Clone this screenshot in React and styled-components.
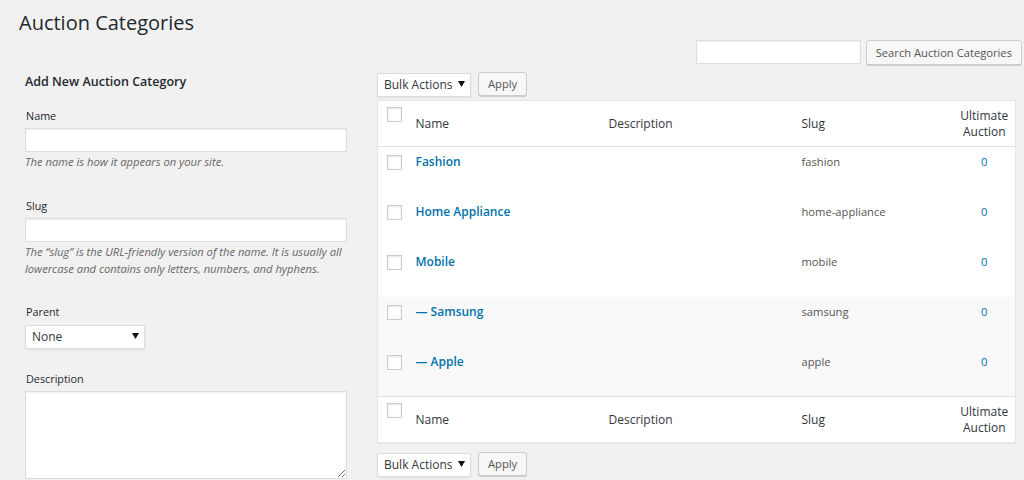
import React from "react";
import styled, { createGlobalStyle } from "styled-components";

const GlobalStyle = createGlobalStyle`
  * {
    box-sizing: border-box;
  }
  body {
    margin: 0;
    background: #f1f1f1;
    font-family: "Open Sans", "Liberation Sans", sans-serif;
    color: #444;
    overflow: hidden;
  }
`;

const Wrap = styled.div`
  padding: 0 2px 0 19px;
  height: 480px;
  overflow: hidden;
`;

const Title = styled.h1`
  margin: 0;
  padding: 8px 0 3px;
  font-size: 20px;
  line-height: 29px;
  font-weight: 400;
  color: #23282d;
`;

const SearchRow = styled.div`
  display: flex;
  justify-content: flex-end;
  gap: 5px;
  height: 24px;
`;

const TextInput = styled.input`
  display: block;
  width: ${(p) => p.$width || "100%"};
  height: 24px;
  margin: 0;
  border: 1px solid #ddd;
  background: #fff;
  box-shadow: inset 0 1px 2px rgba(0, 0, 0, 0.07);
  outline: none;
`;

const TextArea = styled.textarea`
  display: block;
  width: 100%;
  height: 88px;
  margin: 0;
  border: 1px solid #ddd;
  background: #fff;
  box-shadow: inset 0 1px 2px rgba(0, 0, 0, 0.07);
  outline: none;
`;

const Button = styled.button`
  height: ${(p) => (p.$tall ? "25px" : "24px")};
  padding: 0 9px;
  border: 1px solid #ccc;
  border-radius: 3px;
  background: #f7f7f7;
  box-shadow: 0 1px 0 #ccc;
  color: #555;
  font-family: "Open Sans", "Liberation Sans", sans-serif;
  font-size: 11.2px;
  line-height: 22px;
  cursor: pointer;
`;

const SelectWrap = styled.div`
  position: relative;
  width: ${(p) => p.$width};
  height: 24px;
`;

const Select = styled.select`
  appearance: none;
  width: 100%;
  height: 100%;
  margin: 0;
  padding: 0 18px 0 6px;
  border: 1px solid #ddd;
  border-radius: 0;
  background: #fff;
  box-shadow: 0 1px 2px rgba(0, 0, 0, 0.07);
  color: #32373c;
  font-family: "Open Sans", "Liberation Sans", sans-serif;
  font-size: 12px;
  outline: none;
`;

const Arrow = styled.svg`
  position: absolute;
  right: 6px;
  top: 9px;
  pointer-events: none;
`;

function Dropdown({ width, children }) {
  return (
    <SelectWrap $width={width}>
      <Select>{children}</Select>
      <Arrow width="7" height="6" viewBox="0 0 7 6">
        <path d="M0 0 H7 L3.5 6 Z" fill="#111" />
      </Arrow>
    </SelectWrap>
  );
}

const Columns = styled.div`
  display: flex;
  gap: 30px;
`;

const LeftCol = styled.div`
  width: 328px;
  padding-left: 6px;
  flex-shrink: 0;
`;

const RightCol = styled.div`
  flex: 1;
  padding-right: 7px;
`;

const FormTitle = styled.h2`
  margin: 9px 0 16px;
  font-size: 12.5px;
  line-height: 18px;
  font-weight: 600;
  color: #23282d;
`;

const Field = styled.div`
  margin-bottom: ${(p) => p.$gap || "27px"};
`;

const Label = styled.label`
  display: block;
  margin: 0 0 3px 1px;
  font-size: 10.8px;
  line-height: 18px;
  color: #23282d;
`;

const Hint = styled.p`
  margin: 1px 0 0;
  font-size: 11.2px;
  line-height: 17px;
  font-style: italic;
  color: #666;
`;

const TableNav = styled.div`
  display: flex;
  gap: 7px;
  padding: ${(p) => (p.$bottom ? "9px 0 0" : "8px 0 4px")};
`;

const Table = styled.table`
  width: 100%;
  table-layout: fixed;
  border-collapse: collapse;
  border: 1px solid #e5e5e5;
  background: #fff;
  box-shadow: 0 1px 1px rgba(0, 0, 0, 0.04);
`;

const HeadRow = styled.tr`
  height: 46px;
  border-${(p) => (p.$foot ? "top" : "bottom")}: 1px solid #e1e1e1;
`;

const Th = styled.th`
  padding: ${(p) => (p.$center ? "0 4px" : "0 10px")};
  text-align: ${(p) => (p.$center ? "center" : "left")};
  vertical-align: middle;
  font-size: 12px;
  line-height: 16px;
  font-weight: 400;
  color: #32373c;
`;

const CheckCell = styled.td`
  padding: ${(p) => (p.$head ? "6px 0 0 9px" : "8px 0 0 9px")};
  vertical-align: top;
`;

const Check = styled.span`
  display: block;
  width: 15px;
  height: 15px;
  border: 1px solid #c9cdd1;
  background: #fff;
  box-shadow: inset 0 1px 2px rgba(0, 0, 0, 0.1);
`;

const Row = styled.tr`
  height: 50px;
  background: ${(p) => (p.$alt ? "#f9f9f9" : "#fff")};
`;

const Td = styled.td`
  padding: 6px 10px 0;
  vertical-align: top;
  text-align: ${(p) => (p.$center ? "center" : "left")};
  font-size: 11.2px;
  line-height: 18px;
  color: ${(p) => (p.$link ? "#0073aa" : "#555")};
`;

const RowTitle = styled.a`
  font-size: 12px;
  font-weight: 600;
  color: #0073aa;
  text-decoration: none;
`;

const categories = [
  { name: "Fashion", slug: "fashion" },
  { name: "Home Appliance", slug: "home-appliance" },
  { name: "Mobile", slug: "mobile" },
  { name: "— Samsung", slug: "samsung", alt: true },
  { name: "— Apple", slug: "apple", alt: true },
];

function HeaderCells() {
  return (
    <>
      <CheckCell $head as="th">
        <Check />
      </CheckCell>
      <Th>Name</Th>
      <Th>Description</Th>
      <Th>Slug</Th>
      <Th $center>
        Ultimate
        <br />
        Auction
      </Th>
    </>
  );
}

function BulkBar({ bottom }) {
  return (
    <TableNav $bottom={bottom}>
      <Dropdown width="94px">
        <option>Bulk Actions</option>
      </Dropdown>
      <Button>Apply</Button>
    </TableNav>
  );
}

export default function App() {
  return (
    <Wrap>
      <GlobalStyle />
      <Title>Auction Categories</Title>
      <SearchRow>
        <TextInput $width="165px" />
        <Button $tall>Search Auction Categories</Button>
      </SearchRow>
      <Columns>
        <LeftCol>
          <FormTitle>Add New Auction Category</FormTitle>
          <Field>
            <Label>Name</Label>
            <TextInput />
            <Hint>The name is how it appears on your site.</Hint>
          </Field>
          <Field $gap="26px">
            <Label>Slug</Label>
            <TextInput />
            <Hint>
              The “slug” is the URL-friendly version of the name. It is usually
              all lowercase and contains only letters, numbers, and hyphens.
            </Hint>
          </Field>
          <Field $gap="22px">
            <Label>Parent</Label>
            <Dropdown width="120px">
              <option>None</option>
            </Dropdown>
          </Field>
          <Field>
            <Label>Description</Label>
            <TextArea />
          </Field>
        </LeftCol>
        <RightCol>
          <BulkBar />
          <Table>
            <colgroup>
              <col style={{ width: 28 }} />
              <col style={{ width: 193 }} />
              <col style={{ width: 193 }} />
              <col style={{ width: 162 }} />
              <col style={{ width: 62 }} />
            </colgroup>
            <thead>
              <HeadRow>
                <HeaderCells />
              </HeadRow>
            </thead>
            <tbody>
              {categories.map((c) => (
                <Row key={c.slug} $alt={c.alt}>
                  <CheckCell>
                    <Check />
                  </CheckCell>
                  <Td>
                    <RowTitle href="#">{c.name}</RowTitle>
                  </Td>
                  <Td />
                  <Td>{c.slug}</Td>
                  <Td $center $link>
                    0
                  </Td>
                </Row>
              ))}
            </tbody>
            <tfoot>
              <HeadRow $foot>
                <HeaderCells />
              </HeadRow>
            </tfoot>
          </Table>
          <BulkBar bottom />
        </RightCol>
      </Columns>
    </Wrap>
  );
}
